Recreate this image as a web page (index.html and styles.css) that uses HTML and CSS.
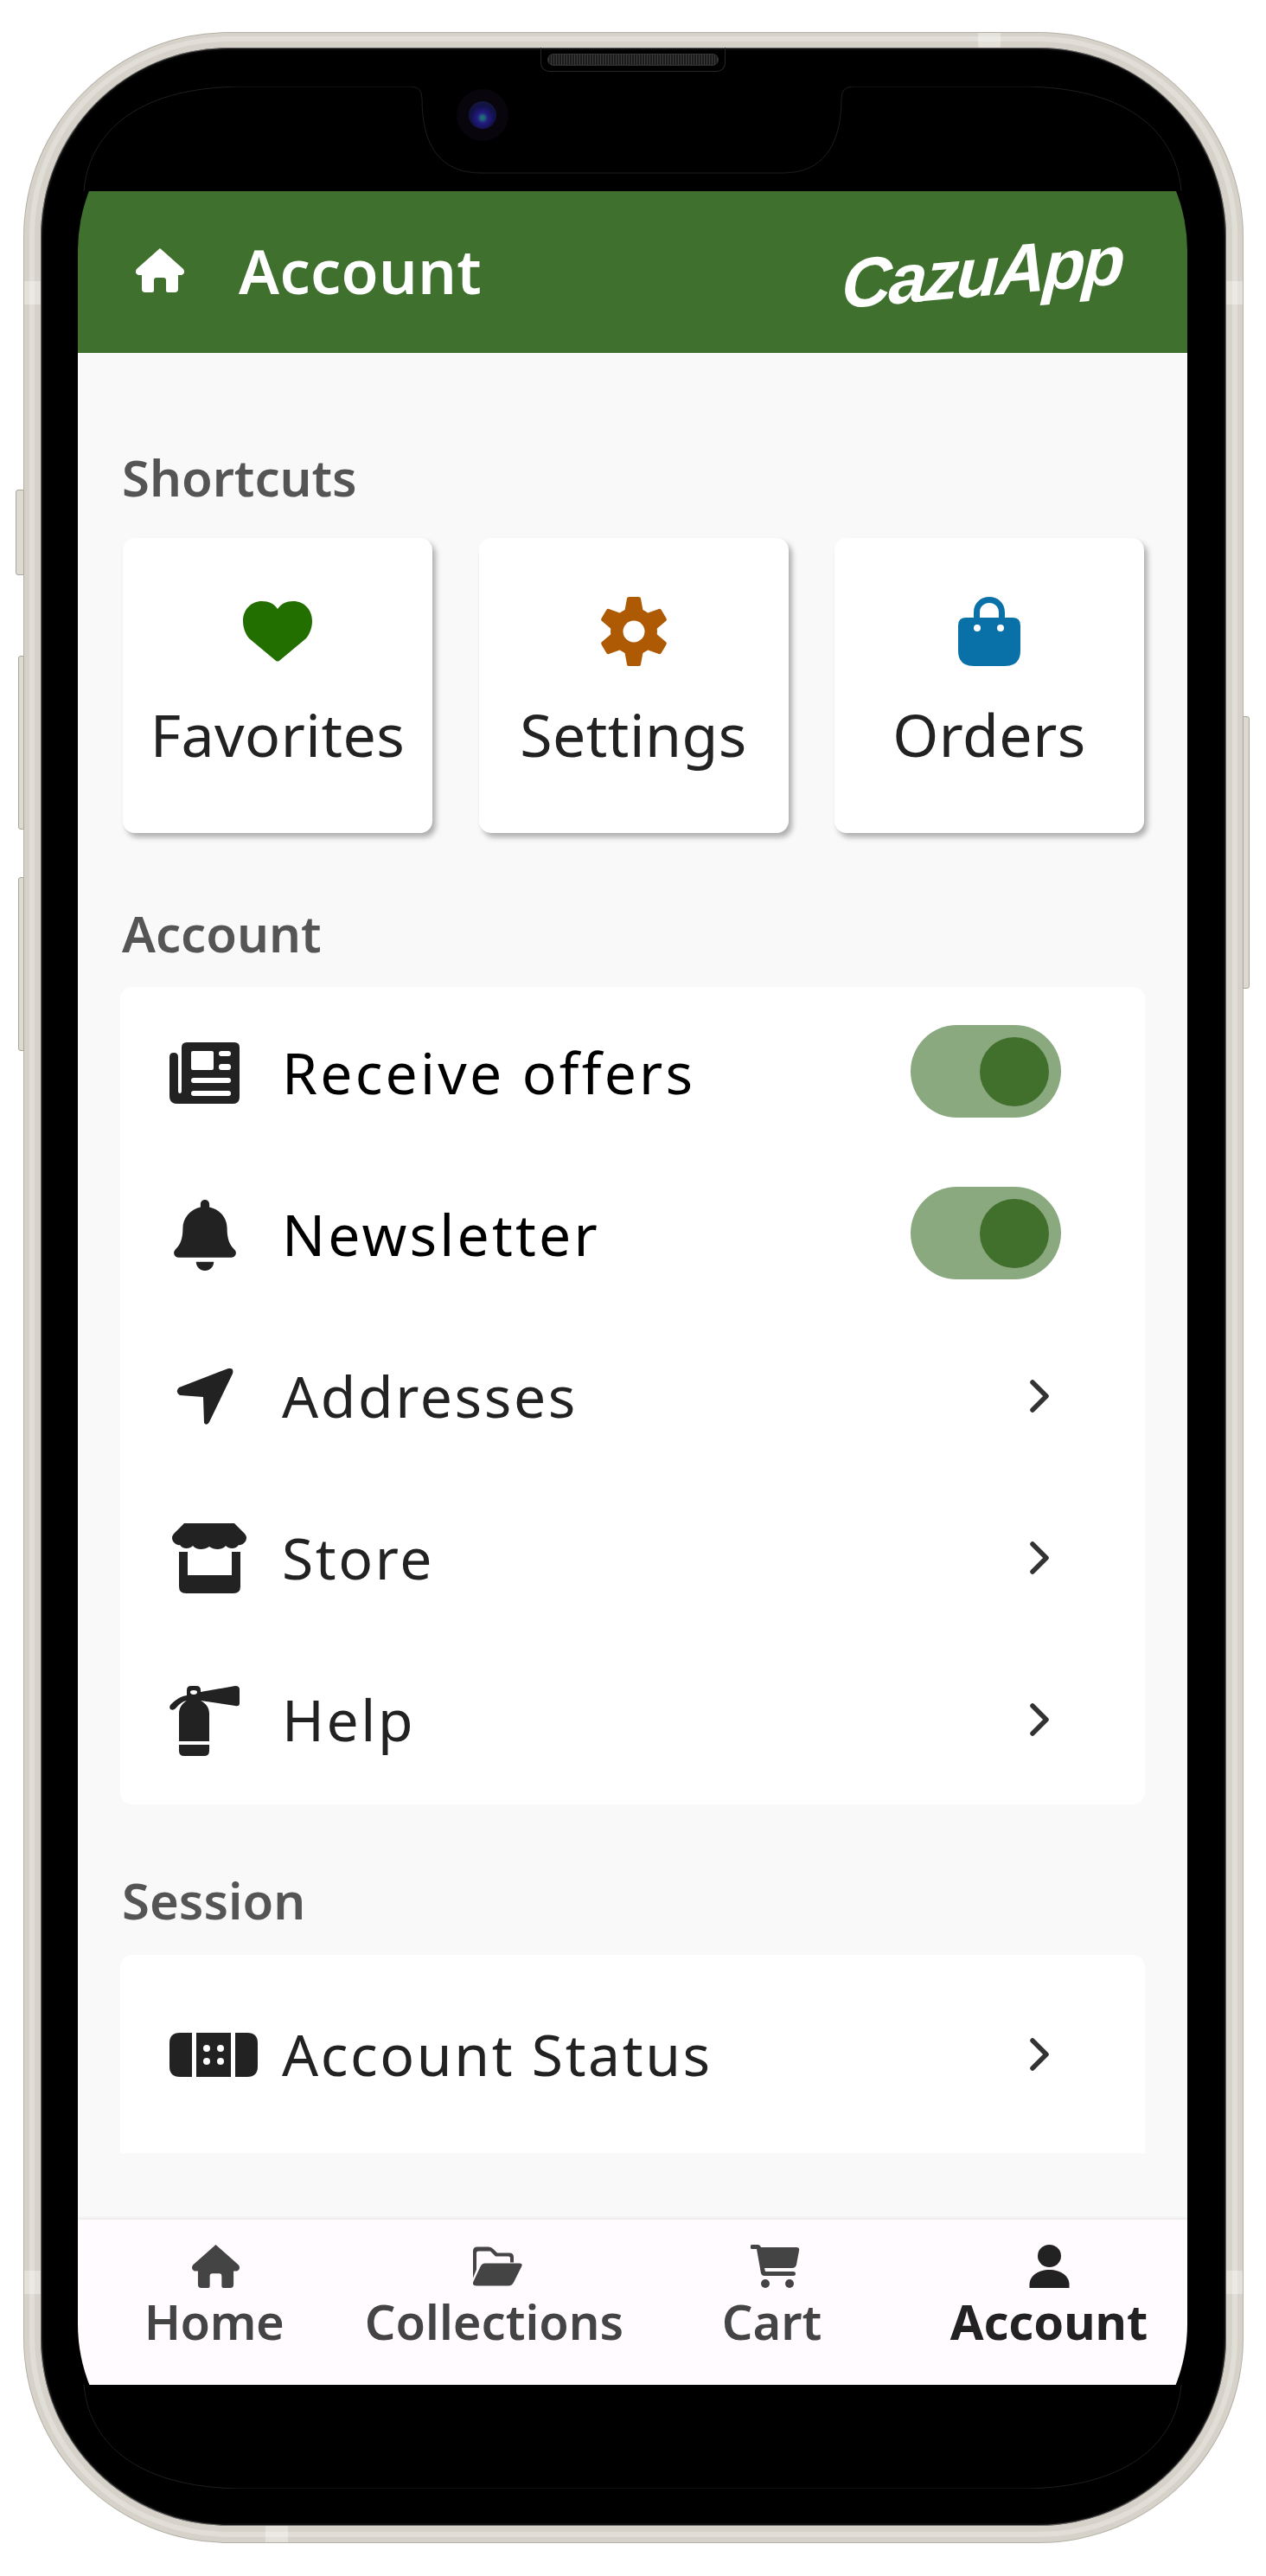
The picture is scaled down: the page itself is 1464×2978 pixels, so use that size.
FILE: index.html
```html
<!DOCTYPE html>
<html lang="en">
<head>
    <meta charset="UTF-8">
    <title>CazuApp - Account</title>
    <link rel="stylesheet" href="styles.css">
</head>
<body>
    <div class="phone">
        <div class="side-btn btn-mute"></div>
        <div class="side-btn btn-up"></div>
        <div class="side-btn btn-down"></div>
        <div class="side-btn btn-power"></div>

        <div class="band band-top"></div>
        <div class="band band-left"></div>
        <div class="band band-right"></div>
        <div class="band band-bottom"></div>
        <div class="band band-left-low"></div>
        <div class="band band-right-low"></div>

        <div class="speaker"><div class="grille"></div></div>
        <div class="camera"><div class="lens"></div></div>

        <!-- hairline around the glass, only shows on the black parts -->
        <svg class="glass-line" viewBox="0 0 1283 2777">
            <path d="M7 121C12 60 60 0 193 0H385Q398 0 398 14C398 70 420 100 467 100H815C860 100 883 70 883 14Q883 0 897 0H1090C1223 0 1271 60 1276 121"/>
            <path d="M7 2657C12 2717 60 2777 193 2777H1090C1223 2777 1271 2717 1276 2657"/>
        </svg>

        <div class="screen">
            <div class="app-header">
                <svg class="header-home" viewBox="0 0 56 51"><path d="M28 0L55 24Q58 29 53 31H49V47Q49 51 45 51H37Q35 51 35 49V37Q35 34 32 34H24Q21 34 21 37V49Q21 51 19 51H11Q7 51 7 47V31H3Q-2 29 1 24Z"/></svg>
                <h1>Account</h1>
                <div class="logo">CazuApp</div>
            </div>

            <div class="content">
                <div class="section-title first">Shortcuts</div>
                <div class="shortcuts">
                    <div class="shortcut">
                        <div class="sc-slot"><svg class="heart" viewBox="0 0 80 70"><path d="M40 9C44 3 50 0 58 0C71 0 80 10 80 23C80 31 77 38 73 43L43 68Q40 71 37 68L7 43C3 38 0 31 0 23C0 10 9 0 22 0C30 0 36 3 40 9Z"/></svg></div>
                        <span>Favorites</span>
                    </div>
                    <div class="shortcut">
                        <div class="sc-slot"><svg class="gear" viewBox="-38 -40 76 80">
                            <path id="tooth" d="M-8 -38Q-8 -40 -5 -40H5Q8 -40 8 -38L11 -22H-11Z"/>
                            <use href="#tooth" transform="rotate(60)"/>
                            <use href="#tooth" transform="rotate(120)"/>
                            <use href="#tooth" transform="rotate(180)"/>
                            <use href="#tooth" transform="rotate(240)"/>
                            <use href="#tooth" transform="rotate(300)"/>
                            <circle r="27"/>
                            <circle class="gear-hole" r="12.5"/>
                        </svg></div>
                        <span>Settings</span>
                    </div>
                    <div class="shortcut">
                        <div class="sc-slot"><svg class="bag" viewBox="0 0 72 80"><path fill-rule="evenodd" d="M18 24V18C18 7 26 0 36 0S54 7 54 18V24H63Q72 24 72 33V62Q72 80 54 80H18Q0 80 0 62V33Q0 24 9 24ZM25 24H47V18C47 11 42 7 36 7S25 11 25 18ZM22 32A4 4 0 1 0 22 40A4 4 0 1 0 22 32ZM49 32A4 4 0 1 0 49 40A4 4 0 1 0 49 32Z"/></svg></div>
                        <span>Orders</span>
                    </div>
                </div>

                <div class="section-title">Account</div>
                <div class="list list-main">
                    <div class="row">
                        <div class="row-icon"><svg class="i-news" viewBox="0 0 81 71"><path fill-rule="evenodd" d="M20 0H75Q81 0 81 6V63Q81 71 73 71H9Q0 71 0 62V17Q0 12 5 12Q10 12 10 17V56Q10 59 12 59Q14 59 14 56V6Q14 0 20 0ZM27 10Q25 10 25 12V30Q25 32 27 32H49Q51 32 51 30V12Q51 10 49 10ZM60 10Q57 10 57 13T60 16H68Q71 16 71 13T68 10ZM60 25Q57 25 57 28.500T60 32H68Q71 32 71 28.500T68 25ZM28 41Q25 41 25 44T28 47H68Q71 47 71 44T68 41ZM28 56Q25 56 25 59T28 62H68Q71 62 71 59T68 56Z"/></svg></div>
                        <div class="row-text strong">Receive offers</div>
                        <div class="toggle"><div class="knob"></div></div>
                    </div>
                    <div class="row">
                        <div class="row-icon"><svg class="i-bell" viewBox="0 0 448 512"><path d="M224 512c35.320 0 63.970-28.650 63.970-64H160.030c0 35.350 28.650 64 63.970 64zm215.390-149.710c-19.320-20.760-55.470-51.990-55.470-154.290 0-77.700-54.480-139.900-127.940-155.160V32c0-17.670-14.320-32-31.980-32s-31.980 14.330-31.980 32v20.840C118.560 68.100 64.080 130.300 64.080 208c0 102.300-36.150 133.530-55.470 154.290-6 6.450-8.660 14.160-8.610 21.710.11 16.400 12.980 32 32.100 32h383.800c19.120 0 32-15.600 32.100-32 .05-7.550-2.610-15.270-8.610-21.710z"/></svg></div>
                        <div class="row-text strong">Newsletter</div>
                        <div class="toggle"><div class="knob"></div></div>
                    </div>
                    <div class="row">
                        <div class="row-icon"><svg class="i-arrow" viewBox="0 0 66 65"><path d="M3 22L60 0Q67 -1 65 6L38 62Q35 67 32 63L31 33L4 31Q-2 27 3 22Z"/></svg></div>
                        <div class="row-text">Addresses</div>
                        <svg class="chevron" viewBox="0 0 26 40"><path d="M5 4L21 20L5 36"/></svg>
                    </div>
                    <div class="row">
                        <div class="row-icon"><svg class="i-store" viewBox="0 0 86 81"><path d="M14 0H72L84 12Q88 17 84 22Q81 26 77 25C74 30 66 30 62 26C58 31 49 31 43 27C37 31 28 31 24 26C20 30 12 30 9 25Q5 26 2 22Q-2 17 2 12Z"/><path d="M8 33H18V60H69V33H79V73Q79 81 71 81H16Q8 81 8 73Z"/></svg></div>
                        <div class="row-text">Store</div>
                        <svg class="chevron" viewBox="0 0 26 40"><path d="M5 4L21 20L5 36"/></svg>
                    </div>
                    <div class="row">
                        <div class="row-icon"><svg class="i-ext" viewBox="0 0 81 82"><path fill-rule="evenodd" d="M25 1H31Q36 1 36 6V8L76 1Q81 1 81 5V21Q81 25 76 24L36 18H36C42 21 46 26 46 33V65H11V33C11 26 15 21 20 18C15 19 11 22 8 26Q5 30 1 28Q-1 25 2 22C7 17 13 13 20 12V6Q20 1 25 1ZM24 8Q24 11 28 11T32 8Q32 6 28 6T24 8Z"/><path d="M11 69H46V76Q46 82 40 82H17Q11 82 11 76Z"/></svg></div>
                        <div class="row-text">Help</div>
                        <svg class="chevron" viewBox="0 0 26 40"><path d="M5 4L21 20L5 36"/></svg>
                    </div>
                </div>

                <div class="section-title">Session</div>
                <div class="list list-cut">
                    <div class="row">
                        <div class="row-icon"><svg class="i-ticket" viewBox="0 0 102 51"><path fill-rule="evenodd" d="M12 0H26V51H12Q0 51 0 39V12Q0 0 12 0ZM31 0H71V51H31ZM76 0H90Q102 0 102 12V39Q102 51 90 51H76ZM43 14A4 4 0 1 0 43 22A4 4 0 1 0 43 14ZM59 14A4 4 0 1 0 59 22A4 4 0 1 0 59 14ZM43 29A4 4 0 1 0 43 37A4 4 0 1 0 43 29ZM59 29A4 4 0 1 0 59 37A4 4 0 1 0 59 29Z"/></svg></div>
                        <div class="row-text">Account Status</div>
                        <svg class="chevron" viewBox="0 0 26 40"><path d="M5 4L21 20L5 36"/></svg>
                    </div>
                </div>
            </div>

            <div class="tabbar">
                <div class="tab tab-home">
                    <svg class="tab-icon" viewBox="0 0 56 51"><path d="M28 0L55 24Q58 29 53 31H49V47Q49 51 45 51H37Q35 51 35 49V37Q35 34 32 34H24Q21 34 21 37V49Q21 51 19 51H11Q7 51 7 47V31H3Q-2 29 1 24Z"/></svg>
                    <span>Home</span>
                </div>
                <div class="tab tab-collections">
                    <svg class="tab-icon" viewBox="0 0 57 45"><path d="M5 0H18Q21 0 24 3L28 7H42Q47 7 47 12V18H43V13Q43 11 41 11H26L20 5H6Q4 5 4 7V26L0 36V5Q0 0 5 0Z"/><path d="M14 19H54Q58 19 56 23L47 41Q45 45 41 45H4Q-1 45 0 41L8 24Q10 19 14 19Z"/></svg>
                    <span>Collections</span>
                </div>
                <div class="tab tab-cart">
                    <svg class="tab-icon" viewBox="0 0 57 50"><path d="M2 0H8Q11 0 12 3H53Q57 3 56 7L53 23Q52 27 48 27H16L17 31H49Q52 31 52 33.500T49 36H16Q13 36 12 33L7 5H2Q-1 5 -1 2.500T2 0Z"/><circle cx="17" cy="45" r="5"/><circle cx="45" cy="45" r="5"/></svg>
                    <span>Cart</span>
                </div>
                <div class="tab tab-account active">
                    <svg class="tab-icon" viewBox="0 0 46 50"><ellipse cx="23" cy="13" rx="13.500" ry="13"/><path d="M0 46C0 36 10 29 23 29S46 36 46 46V50H0Z"/></svg>
                    <span>Account</span>
                </div>
            </div>
        </div>
    </div>
</body>
</html>
```

FILE: styles.css
```css
* {
    box-sizing: border-box;
}
html, body {
    margin: 0;
    background: white;
}
body {
    padding: 38px 0 0 28px;
    height: 2978px;
    overflow: hidden;
    font-family: "Noto Sans", "Open Sans", sans-serif;
}

/* phone body */
.phone {
    position: relative;
    width: 1409px;
    height: 2901px;
    padding: 45px 43px 0 43px;
    background: black;
    border: solid #d6d2c9;
    border-width: 17px 19px 19px 19px;
    border-radius: 236px;
    box-shadow: 0 0 0 1px #b5b1a7, inset 0 0 0 1px #666, inset 0 0 0 3px #0c0c0c;
}
/* lighter strip along the middle of the metal edge */
.phone::after {
    content: "";
    position: absolute;
    inset: -13px -13px -13px -13px;
    border: 6px solid rgba(255,255,255,0.28);
    border-radius: 230px;
    pointer-events: none;
}
.side-btn {
    position: absolute;
    width: 10px;
    background: #dedad2;
    border: 1px solid #aaa69c;
    border-radius: 3px 0 0 3px;
}
.btn-mute {
    left: -29px;
    top: 511px;
    height: 99px;
}
.btn-up {
    left: -26px;
    width: 7px;
    top: 703px;
    height: 201px;
}
.btn-down {
    left: -26px;
    width: 7px;
    top: 959px;
    height: 201px;
}
.btn-power {
    right: -27px;
    width: 8px;
    top: 773px;
    height: 315px;
    border-radius: 0 3px 3px 0;
}
.band {
    position: absolute;
    background: #e4e1da;
}
.band-top {
    left: 1084px;
    top: -17px;
    width: 26px;
    height: 17px;
}
.band-bottom {
    left: 260px;
    bottom: -19px;
    width: 26px;
    height: 19px;
}
.band-left, .band-left-low {
    left: -19px;
    width: 19px;
    height: 27px;
}
.band-right, .band-right-low {
    right: -19px;
    width: 19px;
    height: 27px;
}
.band-left, .band-right {
    top: 270px;
}
.band-left-low, .band-right-low {
    top: 2570px;
}

.speaker {
    position: absolute;
    left: 578px;
    top: 0;
    width: 214px;
    height: 28px;
    padding: 7px 7px 0 7px;
    border: 1px solid #262626;
    border-top: none;
    border-radius: 0 0 10px 10px;
}
.grille {
    height: 14px;
    border-radius: 7px;
    border: 1px solid #333;
    background: repeating-linear-gradient(90deg, #3a3a3a 0 1px, #1c1c1c 1px 3px);
}
.camera {
    position: absolute;
    left: 481px;
    top: 48px;
    width: 60px;
    height: 60px;
    padding: 14px;
    border-radius: 50%;
    background: #08050d;
}
.lens {
    width: 32px;
    height: 32px;
    border-radius: 50%;
    background: radial-gradient(circle at 50% 60%, #1f6b78 0 8%, #241a80 25%, #111248 55%, #1c1c2c 100%);
}
.glass-line {
    position: absolute;
    left: 43px;
    top: 45px;
    width: 1283px;
    height: 2777px;
}
.glass-line path {
    fill: none;
    stroke: #1e1e1e;
    stroke-width: 1;
}

/* screen */
.screen {
    position: relative;
    width: 1283px;
    height: 2777px;
    padding: 121px 0 120px 0;
    border-radius: 190px;
    overflow: hidden;
    display: flex;
    flex-direction: column;
}
.app-header {
    height: 187px;
    flex-shrink: 0;
    background: #40702e;
    color: white;
    display: flex;
    align-items: center;
    padding: 0 74px 0 67px;
}
.header-home {
    width: 56px;
    height: 51px;
    fill: white;
    margin-top: -5px;
}
.app-header h1 {
    margin: -4px 0 0 63px;
    font-size: 70px;
    font-weight: 600;
    letter-spacing: 0.4px;
    flex: 1;
}
.logo {
    font-family: "Liberation Sans", sans-serif;
    font-style: italic;
    font-weight: bold;
    font-size: 80px;
    letter-spacing: -3px;
    transform: rotate(-5deg) skewX(-8deg);
}

.content {
    flex: 1;
    background: #f9f9f9;
    padding: 0 49px 0 49px;
    overflow: hidden;
}
.section-title {
    font-size: 58px;
    font-weight: 600;
    line-height: 70px;
    color: #555;
    margin: 0 0 0 2px;
}
.section-title.first {
    margin-top: 109px;
}
.shortcuts {
    margin-top: 35px;
    display: grid;
    grid-template-columns: repeat(3, 358px);
    justify-content: space-between;
    margin-right: 1px;
    margin-left: 3px;
    margin-bottom: 81px;
}
.shortcut {
    height: 341px;
    padding-top: 66px;
    background: white;
    border-radius: 14px;
    box-shadow: 4px 5px 6px rgba(0,0,0,0.3);
    display: flex;
    flex-direction: column;
    align-items: center;
    color: #222;
    font-size: 68px;
}
.sc-slot {
    height: 84px;
    display: flex;
    align-items: center;
}
.shortcut span {
    margin-top: 39px;
    line-height: 76px;
    letter-spacing: 0.5px;
}
.heart {
    width: 80px;
    height: 70px;
    fill: #226f00;
}
.gear {
    width: 76px;
    height: 80px;
    fill: #ae5a04;
}
.gear-hole {
    fill: white;
}
.bag {
    width: 72px;
    height: 80px;
    fill: #0a70a8;
}

.list {
    background: white;
    border-radius: 14px;
}
.list + .section-title {
    margin-top: 76px;
}
.list-main {
    margin-top: 27px;
    padding: 4px 0 6px 0;
}
.list-cut {
    margin-top: 28px;
    height: 229px;
    border-radius: 14px 14px 0 0;
    padding-top: 20px;
}
.row {
    height: 187px;
    display: flex;
    align-items: center;
    padding: 0 109px 0 57px;
    color: #222;
}
.row-icon {
    width: 81px;
    margin-top: 4px;
    display: flex;
    justify-content: center;
    fill: #222;
    flex-shrink: 0;
}
.i-news {
    width: 81px;
    height: 71px;
}
.i-bell {
    width: 72px;
    height: 82px;
}
.i-arrow {
    width: 66px;
    height: 65px;
}
.i-store {
    width: 86px;
    height: 81px;
    flex-shrink: 0;
    margin: 0 -8px 0 3px;
}
.i-ext {
    width: 81px;
    height: 82px;
}
.i-ticket {
    width: 102px;
    height: 51px;
    flex-shrink: 0;
    margin-right: -21px;
}
.row-text {
    flex: 1;
    margin-left: 49px;
    font-size: 66px;
    letter-spacing: 2.6px;
}
.row-text.strong {
    color: black;
    letter-spacing: 3.2px;
}
.chevron {
    width: 26px;
    height: 40px;
    margin-top: 2px;
    fill: none;
    stroke: #333;
    stroke-width: 5.5;
    stroke-linecap: round;
    stroke-linejoin: round;
}
.toggle {
    width: 174px;
    height: 107px;
    margin-right: -12px;
    background: #8ba97f;
    border-radius: 54px;
    display: flex;
    align-items: center;
    justify-content: flex-end;
    padding-right: 14px;
}
.knob {
    width: 80px;
    height: 80px;
    border-radius: 50%;
    background: #41702d;
}

/* bottom tabs */
.tabbar {
    height: 191px;
    flex-shrink: 0;
    background: #fffbff;
    box-shadow: 0 -2px 3px rgba(0,0,0,0.06);
    display: grid;
    grid-template-columns: 321px 321px 321px 320px;
    color: #444;
}
.tab {
    display: flex;
    flex-direction: column;
    align-items: center;
    padding-top: 29px;
    font-size: 56px;
    font-weight: 600;
    line-height: 60px;
}
.tab-home {
    margin-left: -6px;
    letter-spacing: -0.5px;
}
.tab-home .tab-icon {
    margin-left: 4px;
}
.tab-collections .tab-icon, .tab-cart .tab-icon {
    margin-left: 7px;
}
.tab-icon {
    width: 57px;
    height: 50px;
    fill: #444;
    margin-bottom: 8px;
}
.tab.active {
    color: #222;
    font-weight: bold;
}
.tab.active .tab-icon {
    fill: #222;
}
```
